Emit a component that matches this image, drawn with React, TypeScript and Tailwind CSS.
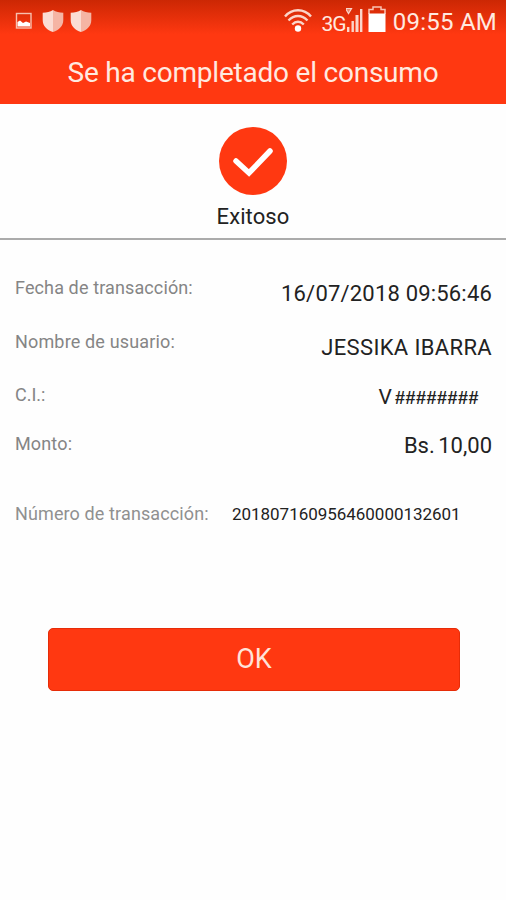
import React from 'react';

const rows = [
  {
    label: 'Fecha de transacción:',
    value: '16/07/2018 09:56:46',
    rowClass: 'h-[54px]',
    labelClass: 'tracking-[0.12px]',
    valueClass: 'mt-[6px] text-[22px] tracking-[0.19px]',
  },
  {
    label: 'Nombre de usuario:',
    value: 'JESSIKA IBARRA',
    rowClass: 'h-[53px]',
    labelClass: 'tracking-[0.16px]',
    valueClass: 'mt-[6px] text-[22px] tracking-[0.35px]',
  },
  {
    label: 'C.I.:',
    value: (
      <>
        V
        <span className="ml-[3px] mr-[13px] font-['Liberation_Sans',sans-serif] text-[18px] font-bold tracking-[0.5px]">
          ########
        </span>
      </>
    ),
    rowClass: 'h-[48px]',
    labelClass: '',
    valueClass: 'mt-[2px] text-[21px]',
  },
  {
    label: 'Monto:',
    value: 'Bs. 10,00',
    rowClass: 'h-[71px]',
    labelClass: 'mt-px tracking-[0.15px]',
    valueClass: 'mt-[3px] text-[22px] [word-spacing:-2px]',
  },
];

function ImageIcon() {
  return (
    <svg className="h-[18px] w-[17px]" viewBox="0 0 17 18">
      <rect x="1.500" y="1.5" width="14.500" height="14.5" fill="none" stroke="#f7bfae" strokeWidth="1.4" />
      <path d="M2.500 10l2.500-1.500 3 2.500 3-1.500 4 1.500v3.500H2.500z" fill="#fff" />
    </svg>
  );
}

function ShieldIcon() {
  return (
    <svg className="h-[22px] w-[22px]" viewBox="0 0 22 22">
      <path d="M11 0C8 2 5 2.700.700 2.700v7.300C.700 16 5 20 11 22z" fill="#fbdcd3" />
      <path d="M11 0c3 2 6 2.700 10.300 2.700v7.300c0 6-4.300 10-10.300 12z" fill="#f5b5a4" />
    </svg>
  );
}

function WifiIcon() {
  return (
    <svg className="h-[25px] w-[30px]" viewBox="0 0 30 25" fill="none" stroke="#fbd5ca" strokeWidth="2.400">
      <path d="M2 8.500C9 .200 21 .200 28 8.500" />
      <path d="M5.500 12.500c5.700-6 13.300-6 19 0" />
      <path d="M9.200 16.500c3.600-3.700 8-3.700 11.600 0" />
      <circle cx="15" cy="20.500" r="3.200" fill="#fff" stroke="none" />
    </svg>
  );
}

function SignalIcon() {
  return (
    <svg className="h-[26px] w-[20px]" viewBox="0 0 20 26">
      <path d="M-.500 1.500h6L2.500 6.500z" fill="#e9886d" stroke="#fbd5ca" strokeWidth="1.200" />
      <path d="M1 20h2.400v5H1zM5.500 14h2.400v11H5.500zM9.500 8h3v17h-3zM14 2h2.400v23H14z" fill="#fbd5ca" />
    </svg>
  );
}

function BatteryIcon() {
  return (
    <svg className="h-[27px] w-[18px]" viewBox="0 0 18 27">
      <path d="M1 8V3.500h4V1h8v2.500h4V8" fill="none" stroke="#f9c3b4" strokeWidth="1.500" />
      <path d="M.500 7.500h17v18.500H.500z" fill="#fff" />
    </svg>
  );
}

export default function App() {
  return (
    <div className="h-[900px] w-[506px] overflow-hidden bg-[#fefefe] font-[Roboto,sans-serif] text-[#222]">
      <header className="h-[103.500px] bg-[#ff3811] text-[#ffeae0]">
        <div className="flex h-[43px] items-start bg-linear-to-b from-[#cc2704] to-[#ff3811] to-80% pl-[15px] pr-[9px]">
          <div className="mt-[12px]"><ImageIcon /></div>
          <div className="ml-[9.500px] mt-[10px] flex gap-[6px]">
            <ShieldIcon />
            <ShieldIcon />
          </div>
          <div className="ml-auto mt-[8px]"><WifiIcon /></div>
          <span className="ml-[9px] mt-[11px] text-[21px] leading-[26px] tracking-[-1px]">3G</span>
          <div className="mt-[7px]"><SignalIcon /></div>
          <div className="ml-[2px] mt-[6px]"><BatteryIcon /></div>
          <span className="ml-[7px] whitespace-nowrap text-[24px] leading-[45px] tracking-[0.250px]">09:55 AM</span>
        </div>
        <h1 className="whitespace-nowrap text-center text-[28px] leading-[60px] tracking-[-0.220px]">Se ha completado el consumo</h1>
      </header>

      <section className="flex h-[136.500px] flex-col items-center border-b-2 border-[#ababab] pt-[23px]">
        <svg className="h-[68px] w-[68px]" viewBox="0 0 68 68">
          <circle cx="34" cy="34" r="34" fill="#ff3811" />
          <path d="M17 34L30 46L51 24" fill="none" stroke="#fff" strokeWidth="5.500" strokeLinecap="round" />
        </svg>
        <span className="mt-[9px] text-[22px] leading-[26px] tracking-[0.100px]">Exitoso</span>
      </section>

      <section className="pl-[15px] pr-[14px] pt-[35px]">
        {rows.map((row) => (
          <div key={row.label} className={`flex items-start justify-between whitespace-nowrap leading-[26px] ${row.rowClass}`}>
            <span className={`text-[18px] text-[#858585] ${row.labelClass}`}>{row.label}</span>
            <span className={row.valueClass}>{row.value}</span>
          </div>
        ))}
        <div className="flex whitespace-nowrap leading-[26px]">
          <span className="w-[217px] text-[18px] tracking-[0.120px] text-[#909090]">Número de transacción:</span>
          <span className="text-[17px] tracking-[-0.030px]">201807160956460000132601</span>
        </div>
      </section>

      <button className="mx-[48px] mt-[101px] block h-[63px] w-[412px] rounded-[5px] border border-[#e62c08] bg-[#ff3811] text-[27px] text-[#ffe3d9]">
        OK
      </button>
    </div>
  );
}
